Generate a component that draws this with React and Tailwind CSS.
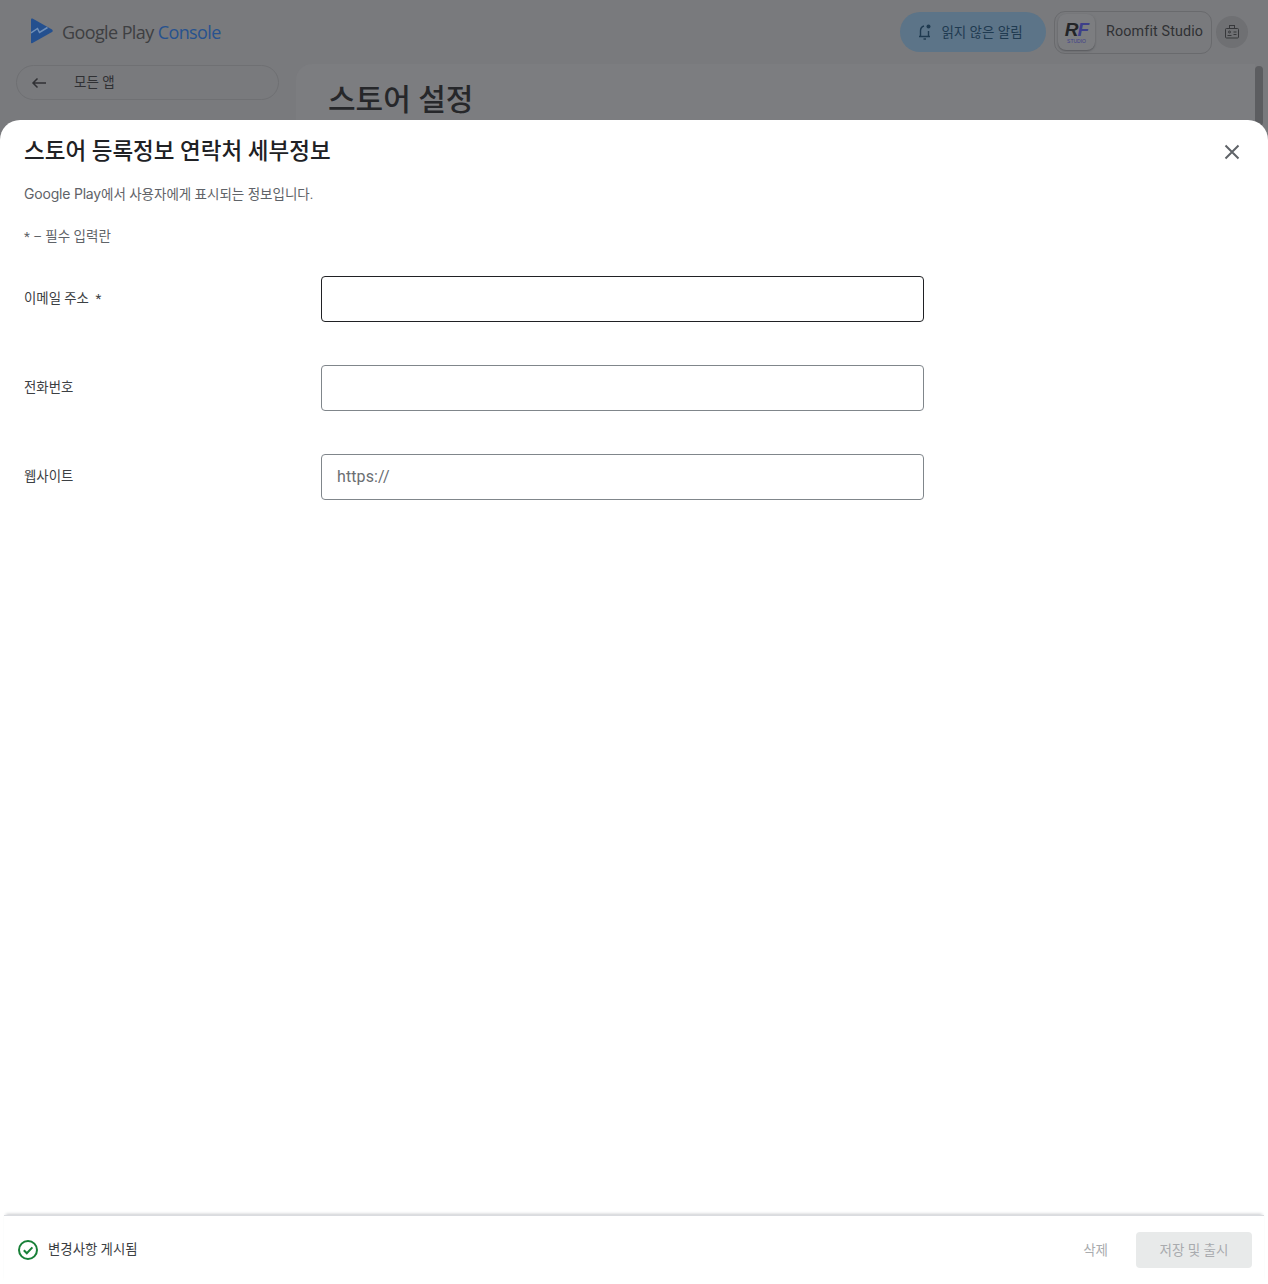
const FONT = "font-['Roboto','Noto_Sans_CJK_KR',sans-serif]";

function Field({ label, required, focused, placeholder }) {
  return (
    <div className="flex items-center h-[46px]">
      <div className="w-[297px] text-[13.4px] leading-5 text-[#3c4043] whitespace-pre">
        {label}
        {required ? <span>{"  *"}</span> : null}
      </div>
      <input
        readOnly
        placeholder={placeholder}
        className={`w-[603px] h-[46px] rounded-[4px] border bg-white pl-[15px] pr-[15px] pb-[2px] text-[16px] tracking-[0.1px] text-[#5f6368] placeholder:text-[#6a6e72] outline-none ${focused ? "border-[#202124]" : "border-[#80868b]"}`}
      />
    </div>
  );
}

export default function App() {
  return (
    <div className={`relative h-screen overflow-hidden bg-[#797a7d] ${FONT}`}>
      <header className="flex items-center justify-between h-[64px] pl-[31px] pr-[20px]">
        <div className="flex items-center gap-[9px]">
          <svg width="22" height="26" viewBox="0 0 22 26" className="mt-[-2px]">
            <path d="M0 1.5 Q0 0 1.5 0.5 L21 11.5 Q22.5 13 21 14 L1.5 25 Q0 25.8 0 24.5 Z" fill="#24508f" />
            <path d="M0 15 L6.5 10.5 L8.5 14.5 L16.5 9.5" fill="none" stroke="#6f8fb8" strokeWidth="1.5" />
          </svg>
          <div className="font-['Open_Sans','Noto_Sans',sans-serif] text-[18px] leading-6 tracking-[-0.6px] whitespace-pre text-[#3e3f42]">
            Google Play <span className="text-[#27528f]">Console</span>
          </div>
        </div>
        <div className="flex items-center">
          <div className="flex items-center justify-center gap-[8px] w-[146px] h-[40px] rounded-full bg-[#5c7488] pr-[6px] text-[13.5px] text-[#1f3a50]">
            <svg width="16" height="18" viewBox="0 0 16 18" fill="none" stroke="#1f3a50" strokeWidth="1.4">
              <path d="M2 13.5 H13 M3.5 13 V8 Q3.5 4 7 3 M11.5 8 V13" />
              <circle cx="11.5" cy="3.5" r="2" fill="#1f3a50" stroke="none" />
              <path d="M6.5 16 H9" />
            </svg>
            <span>읽지 않은 알림</span>
          </div>
          <div className="ml-[8px] flex items-center w-[158px] h-[43px] rounded-[11px] border border-[#696a6d] pl-[3px]">
            <div className="flex flex-col items-center justify-center w-[37px] h-[36px] rounded-[8px] bg-[#7c7d80] shadow-[0_1px_2px_#55565a]">
              <div className="font-['Liberation_Sans',sans-serif] italic font-bold text-[19px] leading-[17px] tracking-[-1px] text-[#232427]">
                R<span className="text-[#3d3f8a]">F</span>
              </div>
              <div className="font-['Liberation_Sans',sans-serif] text-[5px] leading-[6px] text-[#3d3f8a]">STUDIO</div>
            </div>
            <span className="ml-[11px] text-[14.3px] tracking-[0.15px] text-[#303134] whitespace-nowrap">Roomfit Studio</span>
          </div>
          <div className="ml-[4px] flex items-center justify-center w-[32px] h-[32px] rounded-full bg-[#6f7073]">
            <svg width="16" height="16" viewBox="0 0 16 16" fill="none" stroke="#37383b" strokeWidth="1">
              <rect x="1.5" y="4.5" width="13" height="9.5" rx="1" />
              <rect x="5.5" y="1.5" width="5" height="3" />
              <circle cx="5.5" cy="8" r="1" />
              <path d="M3.5 11.5 H7.5 M9.5 8 H12.5 M9.5 10.5 H12.5" />
            </svg>
          </div>
        </div>
      </header>

      <div className="flex">
        <div className="ml-[16px] w-[263px] h-[35px] mt-[1px] flex items-center rounded-full border border-[#6f7073] pl-[14px]">
          <svg width="16" height="12" viewBox="0 0 16 12" fill="none" stroke="#303134" strokeWidth="1.5">
            <path d="M15 6 H2 M6.5 1.5 L2 6 L6.5 10.5" />
          </svg>
          <span className="ml-[27px] text-[13.5px] text-[#303134]">모든 앱</span>
        </div>
        <div className="ml-[17px] flex-1 h-[60px] rounded-tl-[16px] bg-[#7c7d80] pl-[32px] pt-[12px]">
          <h1 className="text-[30px] leading-[48px] font-medium text-[#26272a]">스토어 설정</h1>
        </div>
        <div className="w-[13px] pt-[2px]">
          <div className="w-[8px] h-[60px] rounded-full bg-[#5c5d60]" />
        </div>
      </div>

      <div className="absolute inset-x-0 top-[120px] bottom-0 flex flex-col rounded-t-[20px] bg-white">
        <div className="flex-1 px-[24px]">
          <div className="flex items-start justify-between">
            <h2 className="mt-[15px] text-[22.5px] leading-[32px] font-medium text-[#202124]">스토어 등록정보 연락처 세부정보</h2>
            <svg width="24" height="24" viewBox="0 0 24 24" className="mt-[20px]" fill="none" stroke="#5f6368" strokeWidth="2">
              <path d="M5.5 5.5 L18.5 18.5 M18.5 5.5 L5.5 18.5" />
            </svg>
          </div>
          <p className="mt-[17px] text-[13.5px] leading-5 text-[#5f6368]">
            <span className="font-['Inter','Noto_Sans_CJK_KR',sans-serif] text-[14px] tracking-[-0.2px]">Google Play</span>에서 사용자에게 표시되는 정보입니다.
          </p>
          <p className="mt-[22px] text-[13.5px] leading-5 text-[#5f6368]">* – 필수 입력란</p>
          <div className="mt-[30px] flex flex-col gap-[43px]">
            <Field label="이메일 주소" required focused />
            <Field label="전화번호" />
            <Field label="웹사이트" placeholder="https://" />
          </div>
        </div>
        <div className="mx-[4px] flex items-center justify-between h-[69px] pl-[13px] pr-[12px] border-t border-[#dadce0] shadow-[0_-3px_3px_-2px_#c8cacd]">
          <div className="flex items-center gap-[9px]">
            <svg width="22" height="22" viewBox="0 0 22 22" fill="none" stroke="#188038" strokeWidth="2">
              <circle cx="11" cy="11" r="9" />
              <path d="M6.8 11.2 L9.8 14.2 L15.4 8.4" />
            </svg>
            <span className="text-[13.4px] text-[#3c4043]">변경사항 게시됨</span>
          </div>
          <div className="flex items-center">
            <span className="text-[13.5px] text-[#a9abae]">삭제</span>
            <div className="ml-[28px] flex items-center justify-center w-[116px] h-[36px] rounded-[4px] bg-[#e8eaea] text-[13.5px] text-[#a9abae]">저장 및 출시</div>
          </div>
        </div>
      </div>
    </div>
  );
}
